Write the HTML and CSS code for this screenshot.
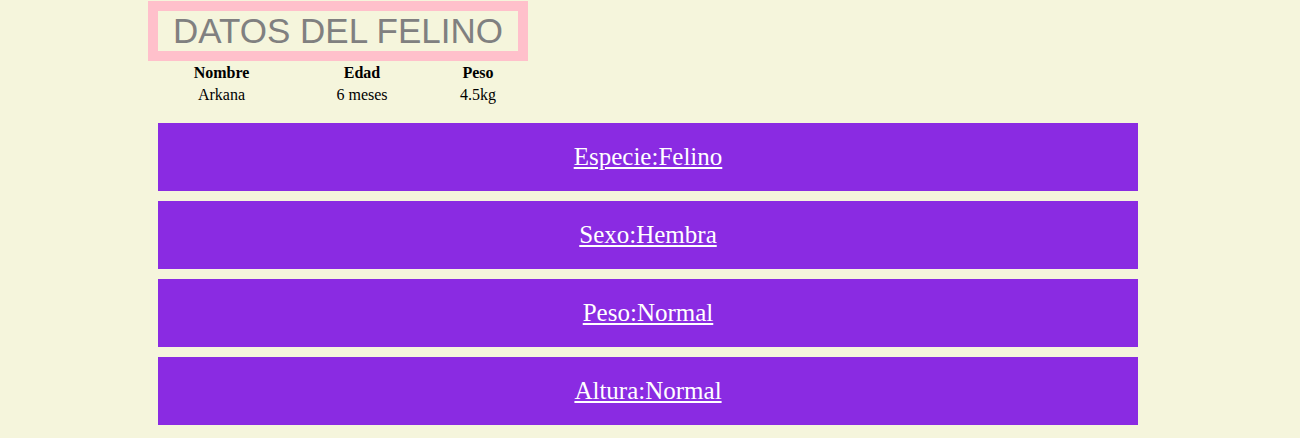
FILE: index.html
```html
<!DOCTYPE html>
<html lang="es">
<head>
<meta charset="utf-8">
<title>Datos del felino</title>
<link rel="stylesheet" href="styles.css">
</head>
<body>
<main class="page">
  <h1 class="title">DATOS DEL FELINO</h1>
  <div class="info">
    <div class="info-head">Nombre</div>
    <div class="info-head">Edad</div>
    <div class="info-head">Peso</div>
    <div class="info-cell">Arkana</div>
    <div class="info-cell">6 meses</div>
    <div class="info-cell">4.5kg</div>
  </div>
  <nav class="bars">
    <div class="bar"><a href="#">Especie:Felino</a></div>
    <div class="bar"><a href="#">Sexo:Hembra</a></div>
    <div class="bar"><a href="#">Peso:Normal</a></div>
    <div class="bar"><a href="#">Altura:Normal</a></div>
  </nav>
</main>
</body>
</html>
```

FILE: styles.css
```css
html, body {
  margin: 0;
  padding: 0;
  background: #f5f5dc;
  font-family: "Liberation Serif", "Times New Roman", serif;
  color: #000;
}

.page {
  padding: 11px 0 0 158px;
  width: 980px;
}

.title {
  display: inline-block;
  margin: 0;
  width: 360px;
  height: 40px;
  box-sizing: border-box;
  outline: 10px solid #ffc0cb;
  font-family: "Liberation Sans", Arial, sans-serif;
  font-weight: normal;
  font-size: 35px;
  line-height: 40px;
  text-align: center;
  color: #808080;
}

.info {
  display: grid;
  grid-template-columns: 127px 154px 78px;
  row-gap: 4px;
  margin-top: 13px;
  font-size: 16px;
  line-height: 18px;
  text-align: center;
}

.info-head {
  font-weight: bold;
}

.bars {
  display: flex;
  flex-direction: column;
  gap: 10px;
  margin-top: 19px;
}

.bar {
  background: #8a2be2;
  padding: 20px 0;
  line-height: 28px;
  text-align: center;
  font-size: 25px;
}

.bar a {
  color: #fff;
  text-decoration: underline;
}
```
